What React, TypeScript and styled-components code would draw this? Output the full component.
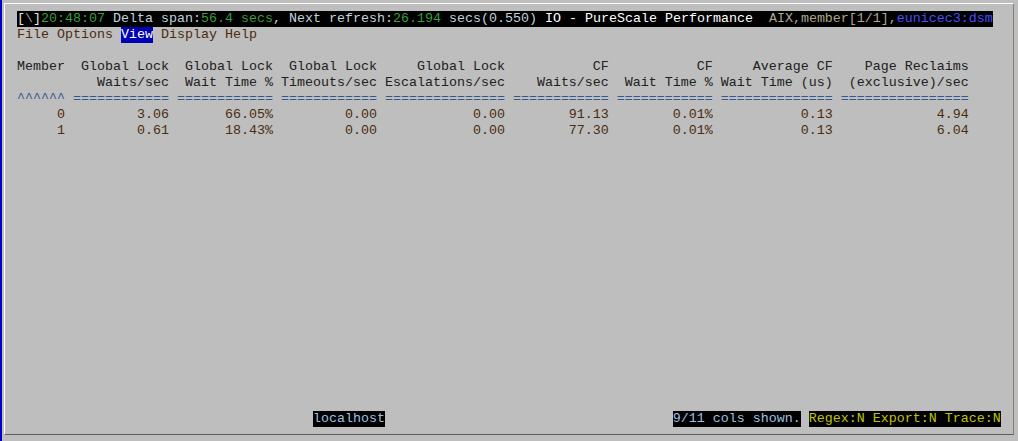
import styled, { createGlobalStyle } from 'styled-components';

const GlobalStyle = createGlobalStyle`
  html, body {
    margin: 0;
    padding: 0;
    background: #bebebe;
  }
`;

const ink = {
  bar: '#000000',
  green: '#3c9c3c',
  pale: '#c4d2de',
  white: '#ffffff',
  tan: '#b0a68e',
  blue: '#4a4aff',
  menu: '#4a2c0c',
  menuSel: '#0000b4',
  head: '#202020',
  rule: '#34588a',
  data: '#4a2c0c',
  status: '#9cc2e2',
  flag: '#c2c400',
};

type Seg = { text: string; fg: string; bg?: string };

type Column = { w: number; h1: string; h2: string; rule: string };

const columns: Column[] = [
  { w: 6, h1: 'Member', h2: '', rule: '^' },
  { w: 12, h1: 'Global Lock', h2: 'Waits/sec', rule: '=' },
  { w: 12, h1: 'Global Lock', h2: 'Wait Time %', rule: '=' },
  { w: 12, h1: 'Global Lock', h2: 'Timeouts/sec', rule: '=' },
  { w: 15, h1: 'Global Lock', h2: 'Escalations/sec', rule: '=' },
  { w: 12, h1: 'CF', h2: 'Waits/sec', rule: '=' },
  { w: 12, h1: 'CF', h2: 'Wait Time %', rule: '=' },
  { w: 14, h1: 'Average CF', h2: 'Wait Time (us)', rule: '=' },
  { w: 16, h1: 'Page Reclaims', h2: '(exclusive)/sec', rule: '=' },
];

const rows: string[][] = [
  ['0', '3.06', '66.05%', '0.00', '0.00', '91.13', '0.01%', '0.13', '4.94'],
  ['1', '0.61', '18.43%', '0.00', '0.00', '77.30', '0.01%', '0.13', '6.04'],
];

const fit = (cells: string[]) =>
  columns.map((c, i) => cells[i].padStart(c.w, ' ')).join(' ');

const title: Seg[] = [
  { text: '[', fg: '#e6e6e6', bg: ink.bar },
  { text: '\\', fg: '#9a9a9a', bg: ink.bar },
  { text: ']', fg: '#e6e6e6', bg: ink.bar },
  { text: '20:48:07', fg: ink.green, bg: ink.bar },
  { text: ' Delta span:', fg: ink.pale, bg: ink.bar },
  { text: '56.4 secs', fg: ink.green, bg: ink.bar },
  { text: ', Next refresh:', fg: ink.pale, bg: ink.bar },
  { text: '26.194', fg: ink.green, bg: ink.bar },
  { text: ' secs(0.550)', fg: ink.pale, bg: ink.bar },
  { text: ' IO - PureScale Performance', fg: ink.white, bg: ink.bar },
  { text: '  AIX,member[1/1],', fg: ink.tan, bg: ink.bar },
  { text: 'eunicec3:dsm', fg: ink.blue, bg: ink.bar },
];

const menu: Seg[] = [
  { text: 'File Options ', fg: ink.menu },
  { text: 'View', fg: ink.white, bg: ink.menuSel },
  { text: ' Display Help', fg: ink.menu },
];

const status: Seg[] = [
  { text: ' '.repeat(37), fg: ink.status },
  { text: 'localhost', fg: ink.status, bg: ink.bar },
  { text: ' '.repeat(36), fg: ink.status },
  { text: '9/11 cols shown.', fg: ink.status, bg: ink.bar },
  { text: ' ', fg: ink.status },
  { text: 'Regex:N Export:N Trace:N', fg: ink.flag, bg: ink.bar },
];

function Segments({ segs }: { segs: Seg[] }) {
  return (
    <>
      {segs.map((s, i) => (
        <Cell key={i} $fg={s.fg} $bg={s.bg}>
          {s.text}
        </Cell>
      ))}
    </>
  );
}

export default function App() {
  return (
    <>
      <GlobalStyle />
      <Window>
        <Panel>
          <Line><Segments segs={title} /></Line>
          <Line><Segments segs={menu} /></Line>
          <Line />
          <Line $fg={ink.head}>{fit(columns.map(c => c.h1))}</Line>
          <Line $fg={ink.head}>{fit(columns.map(c => c.h2))}</Line>
          <Line $fg={ink.rule}>{columns.map(c => c.rule.repeat(c.w)).join(' ')}</Line>
          {rows.map((r, i) => (
            <Line key={i} $fg={ink.data}>{fit(r)}</Line>
          ))}
          <StatusLine><Segments segs={status} /></StatusLine>
        </Panel>
      </Window>
    </>
  );
}

const Window = styled.div`
  width: 1018px;
  height: 441px;
  box-sizing: border-box;
  display: flex;
  background: #bebebe;
  border-left: 2px solid #0000c8;
  padding: 3px 5px 6px 2px;
`;

const Panel = styled.div`
  flex: 1;
  display: flex;
  flex-direction: column;
  padding: 7px 12px;
  border-top: 1px solid #ffffff;
  border-left: 1px solid #ffffff;
  border-right: 1px solid #8a7c6c;
  border-bottom: 1px solid #5c5c5c;
  font-family: 'Liberation Mono', 'DejaVu Sans Mono', monospace;
  font-size: 13.333px;
`;

const Line = styled.div<{ $fg?: string }>`
  height: 16px;
  line-height: 16px;
  white-space: pre;
  color: ${p => p.$fg ?? ink.head};
`;

const StatusLine = styled(Line)`
  margin-top: auto;
`;

const Cell = styled.span<{ $fg: string; $bg?: string }>`
  display: inline-block;
  height: 16px;
  color: ${p => p.$fg};
  background: ${p => p.$bg ?? 'transparent'};
`;
